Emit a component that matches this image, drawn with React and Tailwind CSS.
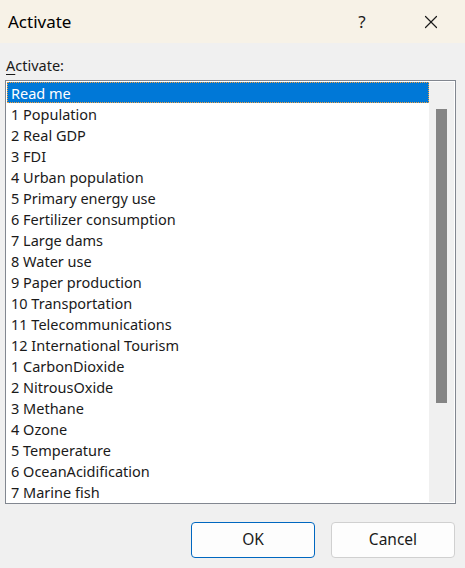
import { X } from "lucide-react";

const items = [
  "Read me",
  "1 Population",
  "2 Real GDP",
  "3 FDI",
  "4 Urban population",
  "5 Primary energy use",
  "6 Fertilizer consumption",
  "7 Large dams",
  "8 Water use",
  "9 Paper production",
  "10 Transportation",
  "11 Telecommunications",
  "12 International Tourism",
  "1 CarbonDioxide",
  "2 NitrousOxide",
  "3 Methane",
  "4 Ozone",
  "5 Temperature",
  "6 OceanAcidification",
  "7 Marine fish",
];

export default function App() {
  return (
    <div
      className="w-[465px] h-[568px] bg-[#f0f0f0] text-[#1a1a1a] overflow-hidden"
      style={{ fontFamily: '"Noto Sans", "Open Sans", Arial, sans-serif' }}
    >
      {/* title bar */}
      <div className="h-[43px] bg-[#f7f2e7] flex items-center">
        <span className="ml-[8px] text-[17px] text-black flex-1">Activate</span>
        <span className="w-[20px] text-center text-[17px] mr-[48px]">?</span>
        <X className="mr-[23px]" size={22} strokeWidth={1.3} />
      </div>

      {/* body */}
      <div className="pt-[12px] px-[5px]">
        <div className="ml-[1px] h-[25px] text-[14.5px] leading-[20px]">
          <span className="underline underline-offset-[3px]">A</span>ctivate:
        </div>
        <div className="w-[451px] h-[424px] border border-[#828790] bg-white flex">
          <div className="flex-1 pl-[1px] pt-[1px]">
            {items.map((item, i) => (
              <div
                key={item + i}
                className={`h-[21px] pl-[4px] text-[14.5px] leading-[22px] whitespace-nowrap ${
                  i === 0
                    ? "bg-[#0078d7] text-white outline outline-1 outline-dotted outline-[#f0a040] -outline-offset-1"
                    : ""
                }`}
              >
                {item}
              </div>
            ))}
          </div>
          <div className="w-[25px] bg-[#f0f0f0] mt-[1px] mb-[1px] mr-[1px] pt-[27px] flex justify-center">
            <div className="w-[11px] h-[294px] bg-[#858585]" />
          </div>
        </div>

        {/* buttons */}
        <div className="mt-[18px] flex justify-end gap-[16px] pr-[5px]">
          <button className="w-[124px] h-[36px] rounded-[4px] border-[1.5px] border-[#0067c0] bg-[#fdfdfd] text-[15.5px]">
            OK
          </button>
          <button className="w-[124px] h-[36px] rounded-[4px] border border-[#d0d0d0] bg-[#fdfdfd] text-[15.5px]">
            Cancel
          </button>
        </div>
      </div>
    </div>
  );
}
